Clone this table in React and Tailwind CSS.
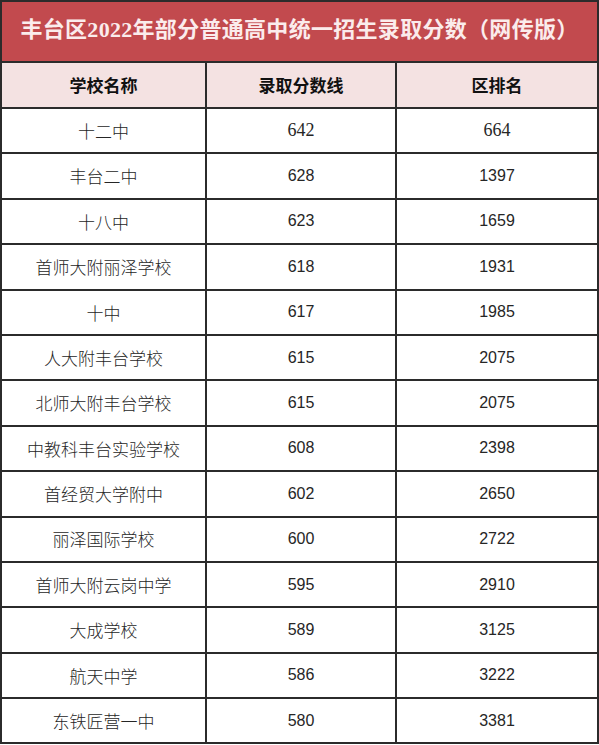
import React from 'react';

const rows = [
  { name: '十二中', score: '642', rank: '664', serif: true },
  { name: '丰台二中', score: '628', rank: '1397' },
  { name: '十八中', score: '623', rank: '1659' },
  { name: '首师大附丽泽学校', score: '618', rank: '1931' },
  { name: '十中', score: '617', rank: '1985' },
  { name: '人大附丰台学校', score: '615', rank: '2075' },
  { name: '北师大附丰台学校', score: '615', rank: '2075' },
  { name: '中教科丰台实验学校', score: '608', rank: '2398' },
  { name: '首经贸大学附中', score: '602', rank: '2650' },
  { name: '丽泽国际学校', score: '600', rank: '2722' },
  { name: '首师大附云岗中学', score: '595', rank: '2910' },
  { name: '大成学校', score: '589', rank: '3125' },
  { name: '航天中学', score: '586', rank: '3222' },
  { name: '东铁匠营一中', score: '580', rank: '3381' },
];

const cjk = { fontFamily: '"Noto Sans CJK SC", sans-serif' };
const num = { fontFamily: '"Liberation Sans", Arial, sans-serif' };
const numSerif = { fontFamily: '"Liberation Serif", "Times New Roman", serif' };

export default function App() {
  return (
    <div className="w-[599px] h-[745px] overflow-hidden bg-white">
      <div className="border-x-2 border-[#2b2b2b]">
        {/* title */}
        <div className="h-[63px] bg-[#c24a4e] border-t-2 border-b-2 border-[#2b2b2b] flex items-center justify-center pb-[4px]">
          <h1
            className="text-[22px] font-bold text-[#fbecec] tracking-[0.3px] whitespace-nowrap"
            style={{ fontFamily: '"Liberation Serif", "Noto Sans CJK SC", serif' }}
          >
            丰台区2022年部分普通高中统一招生录取分数（网传版）
          </h1>
        </div>

        {/* header */}
        <div className="grid grid-cols-[205px_190px_1fr] h-[46px] bg-[#f4e2e2] border-b-2 border-[#2b2b2b] text-[17px] font-bold text-[#111]" style={cjk}>
          <div className="flex items-center justify-center border-r-2 border-[#2b2b2b]">学校名称</div>
          <div className="flex items-center justify-center border-r-2 border-[#2b2b2b]">录取分数线</div>
          <div className="flex items-center justify-center">区排名</div>
        </div>

        {rows.map((r, i) => (
          <div
            key={i}
            className="grid grid-cols-[205px_190px_1fr] h-[45.4px] border-b-2 border-[#2b2b2b] text-[#262626]"
          >
            <div className="flex items-center justify-center border-r-2 border-[#2b2b2b] text-[17px] font-light" style={cjk}>
              {r.name}
            </div>
            <div
              className={`flex items-center justify-center border-r-2 border-[#2b2b2b] ${r.serif ? 'text-[18px]' : 'text-[16px]'}`}
              style={r.serif ? numSerif : num}
            >
              {r.score}
            </div>
            <div
              className={`flex items-center justify-center ${r.serif ? 'text-[18px]' : 'text-[16px]'}`}
              style={r.serif ? numSerif : num}
            >
              {r.rank}
            </div>
          </div>
        ))}
      </div>
    </div>
  );
}
